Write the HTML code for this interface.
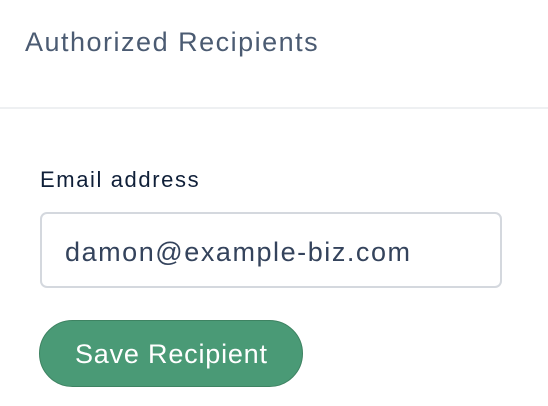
<!DOCTYPE html>
<html><head><style>
body{margin:0;width:548px;height:406px;background:#fff;font-family:"Liberation Sans",sans-serif;position:relative;overflow:hidden}
.t{position:absolute;left:25px;top:42px;transform:translateY(-50%);font-size:27px;line-height:30px;color:#4b5b72;white-space:nowrap;letter-spacing:1.5px}
.hr{position:absolute;left:0;right:0;top:107px;height:2px;background:#eef0f2}
.l{position:absolute;left:40px;top:180px;transform:translateY(-50%);font-size:22px;line-height:26px;color:#0f1f38;white-space:nowrap;letter-spacing:1.6px}
.i{position:absolute;left:40px;top:212px;width:458px;height:72px;border:2px solid #d4d8de;border-radius:7px;box-sizing:content-box}
.i span{position:absolute;left:23px;top:38px;transform:translateY(-50%);font-size:27px;line-height:32px;color:#34435c;white-space:nowrap;letter-spacing:1.55px}
.b{position:absolute;left:39px;top:320px;width:262px;height:65px;border:1.5px solid #3e8362;border-radius:34px;background:#4a9a76}
.b span{position:absolute;left:35px;top:33px;transform:translateY(-50%);font-size:27px;line-height:32px;color:#fff;white-space:nowrap;letter-spacing:0.8px}
</style></head><body>
<div class="t">Authorized Recipients</div>
<div class="hr"></div>
<div class="l">Email address</div>
<div class="i"><span>damon@example-biz.com</span></div>
<div class="b"><span>Save Recipient</span></div>
</body></html>
